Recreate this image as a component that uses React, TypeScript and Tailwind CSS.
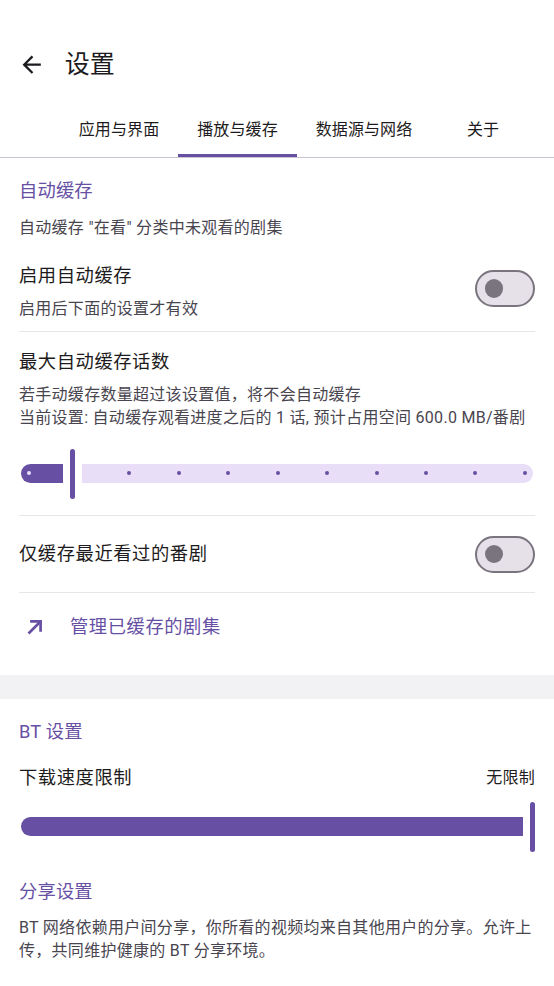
import type { ReactNode } from 'react';

// ─── Icons ─────────────────────────────────────────────────────────────────────

function ArrowBack() {
  return (
    <svg viewBox="0 0 24 24" className="h-[27.4px] w-[27.4px] fill-[#1d1b20]">
      <path d="M20 11H7.83l5.59-5.59L12 4l-8 8 8 8 1.41-1.41L7.83 13H20v-2z" />
    </svg>
  );
}

function NorthEast() {
  return (
    <svg viewBox="0 0 24 24" className="h-6 w-6 fill-none stroke-[#6750a4]" strokeWidth={2.7}>
      <path d="M5.5 18.5 17 7" />
      <path d="M8.5 6.4h9.1v9.1" strokeLinecap="square" />
    </svg>
  );
}

// ─── Small pieces ──────────────────────────────────────────────────────────────

function Switch() {
  return (
    <div className="flex h-[37px] w-[60px] shrink-0 items-center rounded-full border-[2.3px] border-[#79747e] bg-[#e6e0e9] pl-[7.7px]">
      <div className="h-[18.3px] w-[18.3px] rounded-full bg-[#79747e]" />
    </div>
  );
}

function Header({ children, className = '' }: { children: ReactNode; className?: string }) {
  return (
    <p className={`text-[18.3px] leading-[28px] tracking-[0.17px] text-[#6750a4] ${className}`}>{children}</p>
  );
}

function Title({ children, className = '' }: { children: ReactNode; className?: string }) {
  return (
    <p className={`text-[18.3px] leading-[28px] tracking-[0.57px] text-[#1d1b20] ${className}`}>{children}</p>
  );
}

function Desc({ children, className = '' }: { children: ReactNode; className?: string }) {
  return (
    <p className={`text-[16px] leading-[23px] tracking-[0.29px] text-[#49454f] ${className}`}>{children}</p>
  );
}

function Divider() {
  return <div className="h-px bg-[#e7e5ea]" />;
}

function StepSlider() {
  const ticks = Array.from({ length: 9 });
  return (
    <div className="flex h-[51px] items-center px-[2px]">
      <div className="flex h-[18.3px] w-[42px] items-center rounded-l-full rounded-r-[2px] bg-[#6750a4] pl-[6px]">
        <div className="h-1 w-1 rounded-full bg-[#e8def8]" />
      </div>
      <div className="mx-[7px] h-[50px] w-[4.6px] rounded-full bg-[#6750a4]" />
      <div className="flex h-[18.3px] flex-1 items-center justify-between rounded-l-[2px] rounded-r-full bg-[#e8def8] pl-[45.5px] pr-[6px]">
        {ticks.map((_, i) => (
          <div key={i} className="h-1 w-1 rounded-full bg-[#6750a4]" />
        ))}
      </div>
    </div>
  );
}

function FullSlider() {
  return (
    <div className="flex h-[51px] items-center">
      <div className="ml-[2px] h-[18.3px] flex-1 rounded-l-full rounded-r-[2px] bg-[#6750a4]" />
      <div className="ml-[7px] h-[50px] w-[4.6px] rounded-full bg-[#6750a4]" />
    </div>
  );
}

// ─── Main ──────────────────────────────────────────────────────────────────────

const TABS = [
  { label: '应用与界面', w: 'w-[118px]' },
  { label: '播放与缓存', w: 'w-[119px]', active: true },
  { label: '数据源与网络', w: 'w-[134px]' },
  { label: '关于', w: 'w-[104px]' },
];

export default function App() {
  return (
    <div className="min-h-screen w-full overflow-hidden bg-white pt-[28px] font-['Roboto','Noto_Sans_CJK_SC',sans-serif]">
      {/* Top bar */}
      <div className="flex h-[74px] items-center">
        <div className="ml-[18.3px] flex">
          <ArrowBack />
        </div>
        <h1 className="ml-[19px] text-[25px] leading-[32px] text-[#1d1b20]">设置</h1>
      </div>

      {/* Tabs */}
      <div className="flex h-[56px] border-b border-[#cac4d0] pl-[60px]">
        {TABS.map(t => (
          <div key={t.label} className={`relative flex h-[55px] shrink-0 items-center justify-center ${t.w}`}>
            <span className="text-[16px] tracking-[0.1px] text-[#1d1b20]">{t.label}</span>
            {t.active && <div className="absolute inset-x-0 bottom-0 h-[3.4px] bg-[#6750a4]" />}
          </div>
        ))}
      </div>

      {/* 自动缓存 */}
      <section className="px-[19px] pt-[19px] pb-[15px]">
        <Header>自动缓存</Header>
        <Desc className="mt-[11px]">自动缓存 "在看" 分类中未观看的剧集</Desc>

        <div className="flex items-center gap-4 pt-[23px] pb-[11px]">
          <div className="flex-1">
            <Title>启用自动缓存</Title>
            <Desc className="mt-[7px]">启用后下面的设置才有效</Desc>
          </div>
          <div className="mb-[5px]">
            <Switch />
          </div>
        </div>
        <Divider />

        <div className="pt-[16px] pb-[16px]">
          <Title>最大自动缓存话数</Title>
          <Desc className="mt-[7px]">
            若手动缓存数量超过该设置值，将不会自动缓存
            <br />
            当前设置: 自动缓存观看进度之后的 1 话, 预计占用空间 600.0 MB/番剧
          </Desc>
          <div className="mt-[19px]">
            <StepSlider />
          </div>
        </div>
        <Divider />

        <div className="flex h-[76px] items-center">
          <Title className="flex-1">仅缓存最近看过的番剧</Title>
          <Switch />
        </div>
        <Divider />

        <div className="flex h-[67px] items-center">
          <div className="ml-[4px] flex">
            <NorthEast />
          </div>
          <span className="ml-[23px] text-[18.3px] tracking-[0.57px] text-[#6750a4]">管理已缓存的剧集</span>
        </div>
      </section>

      <div className="h-[24px] bg-[#f2f2f4]" />

      {/* BT 设置 */}
      <section className="px-[19px] pt-[19px] pb-6">
        <Header>BT 设置</Header>
        <div className="mt-[18px] flex items-center justify-between">
          <Title>下载速度限制</Title>
          <span className="text-[16px] tracking-[0.29px] text-[#1d1b20]">无限制</span>
        </div>
        <div className="mt-[9px]">
          <FullSlider />
        </div>

        <Header className="mt-[26px]">分享设置</Header>
        <Desc className="mt-[10px]">
          BT 网络依赖用户间分享，你所看的视频均来自其他用户的分享。允许上传，共同维护健康的 BT 分享环境。
        </Desc>
        <Title className="mt-[22px]">上传速度限制</Title>
      </section>
    </div>
  );
}
